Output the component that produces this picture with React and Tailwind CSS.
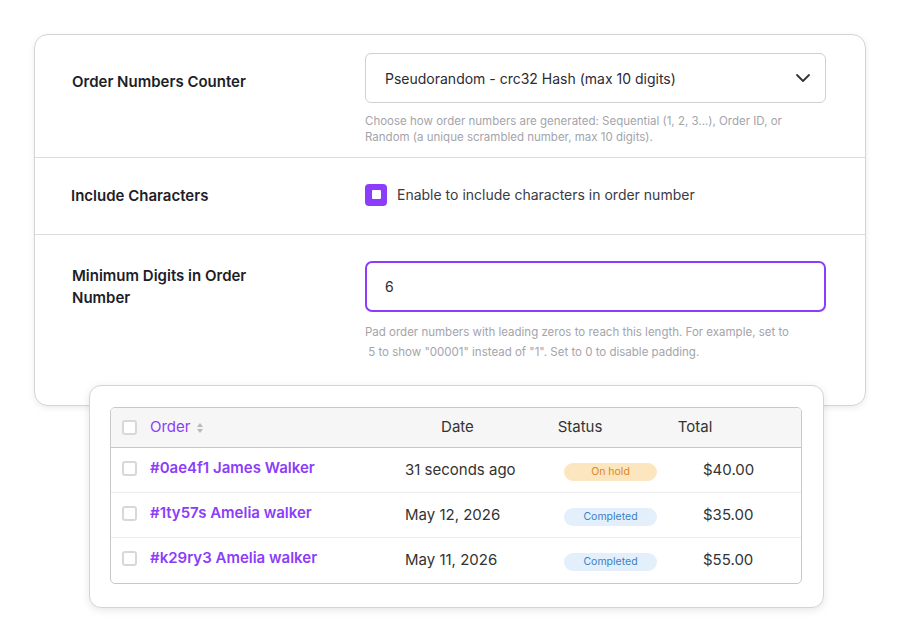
import { ChevronDown } from 'lucide-react'

const font = { fontFamily: 'Inter, "Noto Sans", sans-serif' }

const orders = [
    { id: '#0ae4f1 James Walker', date: '31 seconds ago', status: 'On hold', total: '$40.00' },
    { id: '#1ty57s Amelia walker', date: 'May 12, 2026', status: 'Completed', total: '$35.00' },
    { id: '#k29ry3 Amelia walker', date: 'May 11, 2026', status: 'Completed', total: '$55.00' },
]

function Box() {
    return <span className="inline-block w-[15px] h-[15px] rounded-[3px] border-2 border-[#d8d8dc] bg-white" />
}

export default function App() {
    return (
        <div className="relative w-[899px] h-[642px] bg-white" style={font}>
            <div className="absolute left-[34px] top-[34px] w-[832px] h-[372px] rounded-[14px] border border-[#d4d4d4] bg-white shadow-[0_2px_6px_rgba(0,0,0,0.08)] flex flex-col">
                <div className="h-[123px] flex border-b border-[#dcdcdc]">
                    <div className="w-[330px] pl-[37px] pt-[36px] text-[15px] font-semibold text-[#1e1e28]">Order Numbers Counter</div>
                    <div className="pt-[18px] w-[461px]">
                        <div className="h-[50px] rounded-[6px] border border-[#cfcfd4] flex items-center justify-between pl-[19px] pr-[10px] text-[14px] text-[#2b2b33]">
                            Pseudorandom - crc32 Hash (max 10 digits)
                            <ChevronDown size={24} strokeWidth={1.8} className="text-[#333]" />
                        </div>
                        <p className="mt-[10px] text-[11.5px] leading-[16px] text-[#a4a4ab]">
                            Choose how order numbers are generated: Sequential (1, 2, 3...), Order ID, or Random (a unique scrambled number, max 10 digits).
                        </p>
                    </div>
                </div>
                <div className="h-[77px] flex items-center border-b border-[#dcdcdc]">
                    <div className="w-[330px] pl-[36px] text-[15px] font-semibold text-[#1e1e28]">Include Characters</div>
                    <div className="flex items-center gap-[10px] -mt-[3px]">
                        <span className="w-[22px] h-[22px] rounded-[4px] bg-[#8b3dfa] flex items-center justify-center">
                            <span className="w-[9px] h-[9px] bg-white rounded-[1px]" />
                        </span>
                        <span className="text-[14px] text-[#3a3a44]">Enable to include characters in order number</span>
                    </div>
                </div>
                <div className="flex">
                    <div className="w-[330px] pl-[37px] pt-[30px] text-[15px] font-semibold leading-[22px] text-[#1e1e28]">Minimum Digits in Order<br />Number</div>
                    <div className="pt-[26px] w-[461px]">
                        <div className="h-[51px] rounded-[7px] border-2 border-[#8b3dfa] flex items-center pl-[18px] text-[14px] text-[#2b2b33]">6</div>
                        <p className="mt-[10px] text-[11.5px] leading-[20px] text-[#a4a4ab]">
                            Pad order numbers with leading zeros to reach this length. For example, set to<br />&nbsp;5 to show "00001" instead of "1". Set to 0 to disable padding.
                        </p>
                    </div>
                </div>
            </div>

            <div className="absolute left-[89px] top-[385px] w-[735px] h-[223px] rounded-[12px] border border-[#d4d4d4] bg-white shadow-[0_2px_8px_rgba(0,0,0,0.1)] px-[20px] pt-[21px]">
                <div className="w-[692px] rounded-[5px] border border-[#c8c8cc] overflow-hidden text-[15px]">
                    <div className="h-[40px] bg-[#f6f6f7] border-b border-[#c8c8cc] flex items-center text-[#333]">
                        <div className="w-[39px] pl-[11px] flex"><Box /></div>
                        <div className="w-[240px] flex items-center gap-[6px] text-[#8b3dfa]">
                            Order
                            <svg width="8" height="12" viewBox="0 0 8 12"><path d="M4 1 L7 5 H1 Z M4 11 L1 7 H7 Z" fill="#b8b8bf" /></svg>
                        </div>
                        <div className="w-[135px] text-center">Date</div>
                        <div className="w-[110px] text-center">Status</div>
                        <div className="w-[120px] text-center">Total</div>
                    </div>
                    {orders.map((o, i) => (
                        <div key={o.id} className={`h-[45px] flex items-center ${i < 2 ? 'border-b border-[#ececee]' : ''}`}>
                            <div className="w-[39px] pl-[11px] flex -mt-[4px]"><Box /></div>
                            <div className="w-[255px] font-semibold text-[#8b3dfa] -mt-[4px]">{o.id}</div>
                            <div className="w-[159px] text-[#333]">{o.date}</div>
                            <div className="w-[139px]">
                                <span className={`inline-flex items-center justify-center w-[93px] h-[18px] rounded-full text-[10.5px] ${o.status === 'On hold' ? 'bg-[#fbe6c0] text-[#e0871d]' : 'bg-[#e3f0fc] text-[#3b7fc4]'}`}>{o.status}</span>
                            </div>
                            <div className="text-[#333]">{o.total}</div>
                        </div>
                    ))}
                </div>
            </div>
        </div>
    )
}
